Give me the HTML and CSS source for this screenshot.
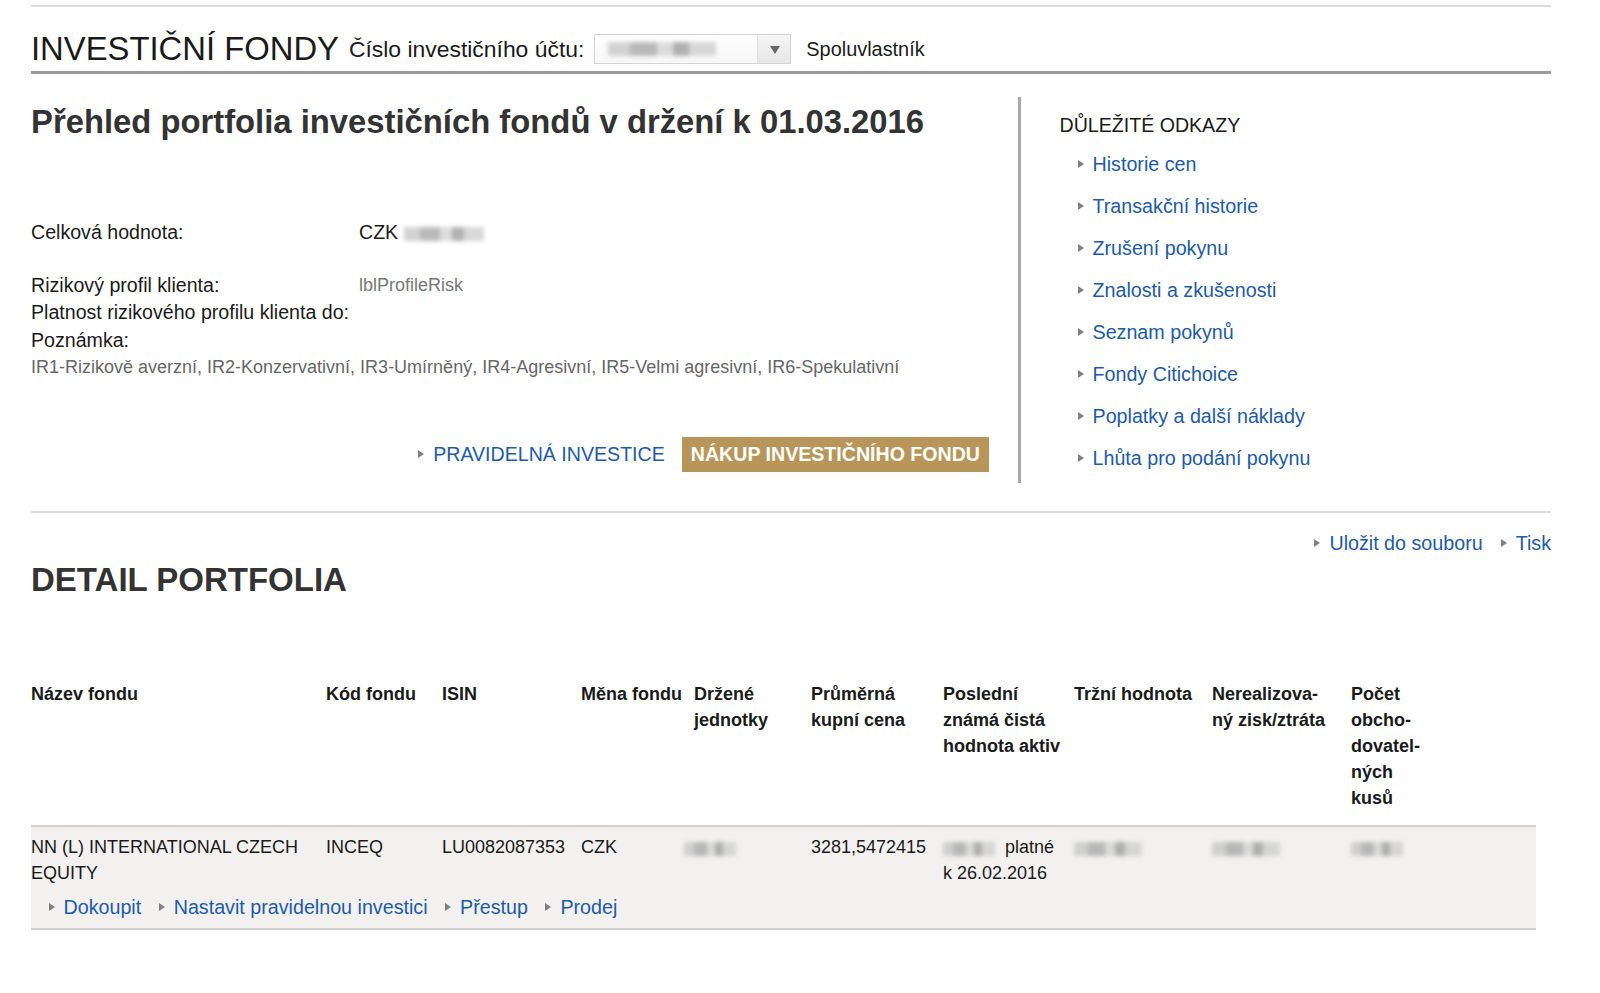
FILE: index.html
```html
<!DOCTYPE html>
<html lang="cs">
<head>
  <meta charset="UTF-8">
  <meta name="viewport" content="width=device-width, initial-scale=1.0">
  <title>Investiční fondy</title>
  <link rel="stylesheet" href="styles.css">
</head>
<body>
  <div class="page">
    <div class="topline"></div>

    <div class="header">
      <span class="title">INVESTIČNÍ FONDY</span>
      <span class="account-label">Číslo investičního účtu:</span>
      <div class="select">
        <span class="select-value"><span class="blur blur-wide"></span></span>
        <span class="select-arrow"></span>
      </div>
      <span class="coowner">Spoluvlastník</span>
    </div>

    <div class="overview">
      <div class="summary">
        <h1>Přehled portfolia investičních fondů v držení k 01.03.2016</h1>

        <div class="row total">
          <span class="label">Celková hodnota:</span>
          <span class="value">CZK<span class="blur blur-total"></span></span>
        </div>
        <div class="row risk">
          <span class="label">Rizikový profil klienta:</span>
          <span class="value muted">lblProfileRisk</span>
        </div>
        <div class="row">
          <span class="label">Platnost rizikového profilu klienta do:</span>
        </div>
        <div class="row">
          <span class="label">Poznámka:</span>
        </div>
        <p class="note">IR1-Rizikově averzní, IR2-Konzervativní, IR3-Umírněný, IR4-Agresivní, IR5-Velmi agresivní, IR6-Spekulativní</p>

        <div class="actions">
          <a href="#" class="arrow-link">PRAVIDELNÁ INVESTICE</a>
          <a href="#" class="btn-gold">NÁKUP INVESTIČNÍHO FONDU</a>
        </div>
      </div>

      <div class="links">
        <h2>DŮLEŽITÉ ODKAZY</h2>
        <ul>
          <li><a href="#" class="arrow-link">Historie cen</a></li>
          <li><a href="#" class="arrow-link">Transakční historie</a></li>
          <li><a href="#" class="arrow-link">Zrušení pokynu</a></li>
          <li><a href="#" class="arrow-link">Znalosti a zkušenosti</a></li>
          <li><a href="#" class="arrow-link">Seznam pokynů</a></li>
          <li><a href="#" class="arrow-link">Fondy Citichoice</a></li>
          <li><a href="#" class="arrow-link">Poplatky a další náklady</a></li>
          <li><a href="#" class="arrow-link">Lhůta pro podání pokynu</a></li>
        </ul>
      </div>
    </div>

    <div class="divider"></div>

    <div class="tools">
      <a href="#" class="arrow-link">Uložit do souboru</a>
      <a href="#" class="arrow-link">Tisk</a>
    </div>

    <h2 class="detail-title">DETAIL PORTFOLIA</h2>

    <table class="portfolio">
      <colgroup>
        <col style="width: 295px">
        <col style="width: 116px">
        <col style="width: 139px">
        <col style="width: 113px">
        <col style="width: 117px">
        <col style="width: 132px">
        <col style="width: 131px">
        <col style="width: 138px">
        <col style="width: 139px">
        <col style="width: 185px">
      </colgroup>
      <thead>
        <tr>
          <th>Název fondu</th>
          <th>Kód fondu</th>
          <th>ISIN</th>
          <th>Měna fondu</th>
          <th>Držené<br>jednotky</th>
          <th>Průměrná<br>kupní cena</th>
          <th>Poslední<br>známá čistá<br>hodnota aktiv</th>
          <th>Tržní hodnota</th>
          <th>Nerealizova-<br>ný zisk/ztráta</th>
          <th>Počet<br>obcho-<br>dovatel-<br>ných<br>kusů</th>
        </tr>
      </thead>
      <tbody>
        <tr class="fund">
          <td>NN (L) INTERNATIONAL CZECH EQUITY</td>
          <td>INCEQ</td>
          <td>LU0082087353</td>
          <td>CZK</td>
          <td><span class="blur blur-small blur-left"></span></td>
          <td>3281,5472415</td>
          <td><span class="blur blur-small"></span> &nbsp;platné<br>k 26.02.2016</td>
          <td><span class="blur blur-mid"></span></td>
          <td><span class="blur blur-mid"></span></td>
          <td><span class="blur blur-small"></span></td>
        </tr>
        <tr class="fund-actions">
          <td colspan="10">
            <a href="#" class="arrow-link">Dokoupit</a>
            <a href="#" class="arrow-link">Nastavit pravidelnou investici</a>
            <a href="#" class="arrow-link">Přestup</a>
            <a href="#" class="arrow-link">Prodej</a>
          </td>
        </tr>
      </tbody>
    </table>
  </div>
</body>
</html>
```

FILE: styles.css
```css
body {
  margin: 0;
  background: #fff;
  color: #1a1a1a;
  font-family: "Liberation Sans", Arial, sans-serif;
}
a {
  color: #1d5aa8;
  text-decoration: none;
}
.page {
  width: 1520px;
  margin: 0 31px;
}
.topline {
  height: 2px;
  margin-top: 5px;
  background: #dcdcdc;
}

/* header */
.header {
  display: flex;
  align-items: center;
  box-sizing: border-box;
  height: 67px;
  padding-top: 20px;
  border-bottom: 3px solid #9a9a9a;
}
.title {
  font-size: 32.8px;
  margin-right: 10px;
}
.account-label {
  font-size: 22.9px;
  margin-right: 10px;
}
.select {
  display: flex;
  box-sizing: border-box;
  width: 197px;
  height: 30px;
  border: 1px solid #d4d4d4;
  background: linear-gradient(#fff, #f7f7f7);
  margin-right: 15px;
}
.select-value {
  flex: 1;
  display: flex;
  align-items: center;
  padding-left: 13px;
}
.select-arrow {
  width: 32px;
  border-left: 1px solid #e0e0e0;
  background: linear-gradient(#f6f6f6, #e6e6e6);
  position: relative;
}
.select-arrow::after {
  content: "";
  position: absolute;
  left: 12px;
  top: 11px;
  border-left: 5px solid transparent;
  border-right: 5px solid transparent;
  border-top: 8px solid #666;
}
.coowner {
  font-size: 19.9px;
}

/* blurred values */
.blur {
  display: inline-block;
  height: 14px;
  vertical-align: middle;
  background:
    linear-gradient(90deg, #c8c8c8 0 20%, #a9a9a9 20% 45%, #d4d4d4 45% 60%, #9e9e9e 60% 75%, #cfcfcf 75% 100%);
  filter: blur(2px);
  opacity: 0.8;
}
.blur-wide { width: 108px; }
.blur-total { width: 80px; margin-left: 6px; }
.blur-small { width: 52px; }
.blur-mid { width: 68px; }
.blur-left { margin-left: -10px; }

/* overview */
.overview {
  display: flex;
  margin-top: 22.5px;
}
.summary {
  width: 958px;
  height: 386px;
  padding-right: 29px;
  border-right: 3px solid #a8a8a8;
  display: flex;
  flex-direction: column;
}
.summary h1 {
  margin: 5px 0 0;
  font-size: 32.8px;
  line-height: 40px;
  color: #333;
}
.row {
  display: flex;
  font-size: 19.6px;
  line-height: 27.5px;
}
.row .label {
  width: 328px;
}
.row.total {
  margin-top: 77.5px;
}
.row.risk {
  margin-top: 25px;
}
.muted {
  color: #777;
  font-size: 18px;
}
.note {
  margin: 0;
  font-size: 18px;
  line-height: 27.5px;
  color: #666;
}
.actions {
  display: flex;
  justify-content: flex-end;
  align-items: center;
  gap: 17px;
  margin-top: 55px;
  font-size: 19.6px;
}
.btn-gold {
  display: inline-block;
  background: #b8965a;
  color: #fff;
  font-weight: bold;
  font-size: 19.6px;
  line-height: 35px;
  padding: 0 9px;
}

/* arrow links */
.arrow-link {
  position: relative;
  padding-left: 15px;
}
.arrow-link::before {
  content: "";
  position: absolute;
  left: 0;
  top: 50%;
  margin-top: -4px;
  border-top: 4.5px solid transparent;
  border-bottom: 4.5px solid transparent;
  border-left: 6px solid #808080;
}

/* right links */
.links {
  padding-left: 38.5px;
  padding-top: 15.7px;
}
.links h2 {
  margin: 0 0 6px;
  font-size: 19.6px;
  font-weight: normal;
  line-height: 26px;
}
.links ul {
  list-style: none;
  margin: 0;
  padding: 0 0 0 18px;
}
.links li {
  font-size: 19.7px;
  line-height: 41.9px;
}

/* detail */
.divider {
  height: 2px;
  background: #dcdcdc;
  margin-top: 28px;
}
.tools {
  display: flex;
  justify-content: flex-end;
  gap: 18px;
  font-size: 19.7px;
  margin-top: 18.6px;
  line-height: 24px;
}
.detail-title {
  margin: 4.7px 0 0;
  font-size: 33px;
  line-height: 40px;
  color: #333;
}
.portfolio {
  width: 1505px;
  border-collapse: collapse;
  table-layout: fixed;
  margin-top: 81.5px;
  font-size: 18px;
}
.portfolio th {
  text-align: left;
  vertical-align: top;
  font-weight: bold;
  line-height: 26px;
  padding: 0 6px 13.5px 0;
  border-bottom: 2px solid #d0d0d0;
}
.portfolio td {
  vertical-align: top;
  line-height: 26px;
  padding: 7.5px 6px 0 0;
}
.fund td {
  background: #f2f1f0;
}
.fund-actions td {
  background: #f2f1f0;
  border-bottom: 2px solid #d0d0d0;
  padding: 7px 0 6.5px 17.5px;
  font-size: 19.7px;
  line-height: 28px;
}
.fund-actions .arrow-link {
  margin-right: 12px;
}
```
